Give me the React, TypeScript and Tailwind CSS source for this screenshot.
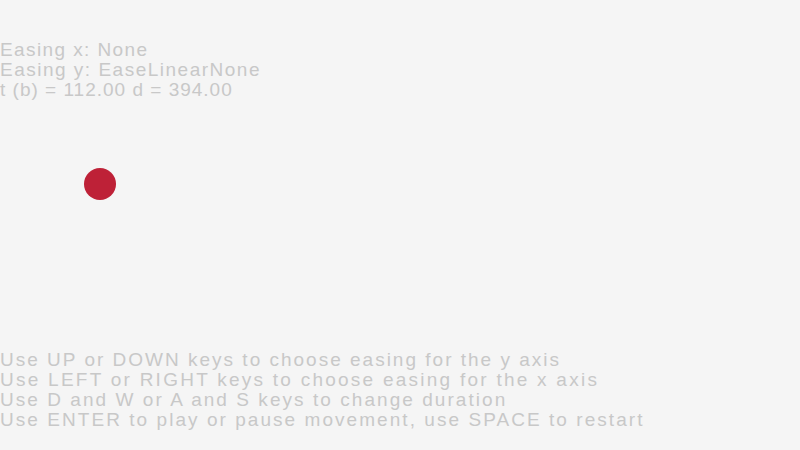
export default function App() {
    return (
        <div
            className="relative w-[800px] h-[450px] bg-[#f5f5f5] text-[#c8c8c8] text-[19px] leading-[20px] overflow-hidden flex flex-col"
            style={{ fontFamily: '"Liberation Sans", Arial, sans-serif' }}
        >
            <div className="pt-[40px] flex flex-col">
                <span className="whitespace-nowrap tracking-[1.4px]">Easing x: None</span>
                <span className="whitespace-nowrap tracking-[1.5px]">Easing y: EaseLinearNone</span>
                <span className="whitespace-nowrap tracking-[1px]">t (b) = 112.00 d = 394.00</span>
            </div>
            <div className="mt-[250px] flex flex-col">
                <span className="whitespace-nowrap tracking-[2px]">Use UP or DOWN keys to choose easing for the y axis</span>
                <span className="whitespace-nowrap tracking-[2.25px]">Use LEFT or RIGHT keys to choose easing for the x axis</span>
                <span className="whitespace-nowrap tracking-[2.05px]">Use D and W or A and S keys to change duration</span>
                <span className="whitespace-nowrap tracking-[2.05px]">Use ENTER to play or pause movement, use SPACE to restart</span>
            </div>
            <div className="absolute left-[84px] top-[168px] w-[32px] h-[32px] rounded-full bg-[#be2137]" />
        </div>
    )
}
